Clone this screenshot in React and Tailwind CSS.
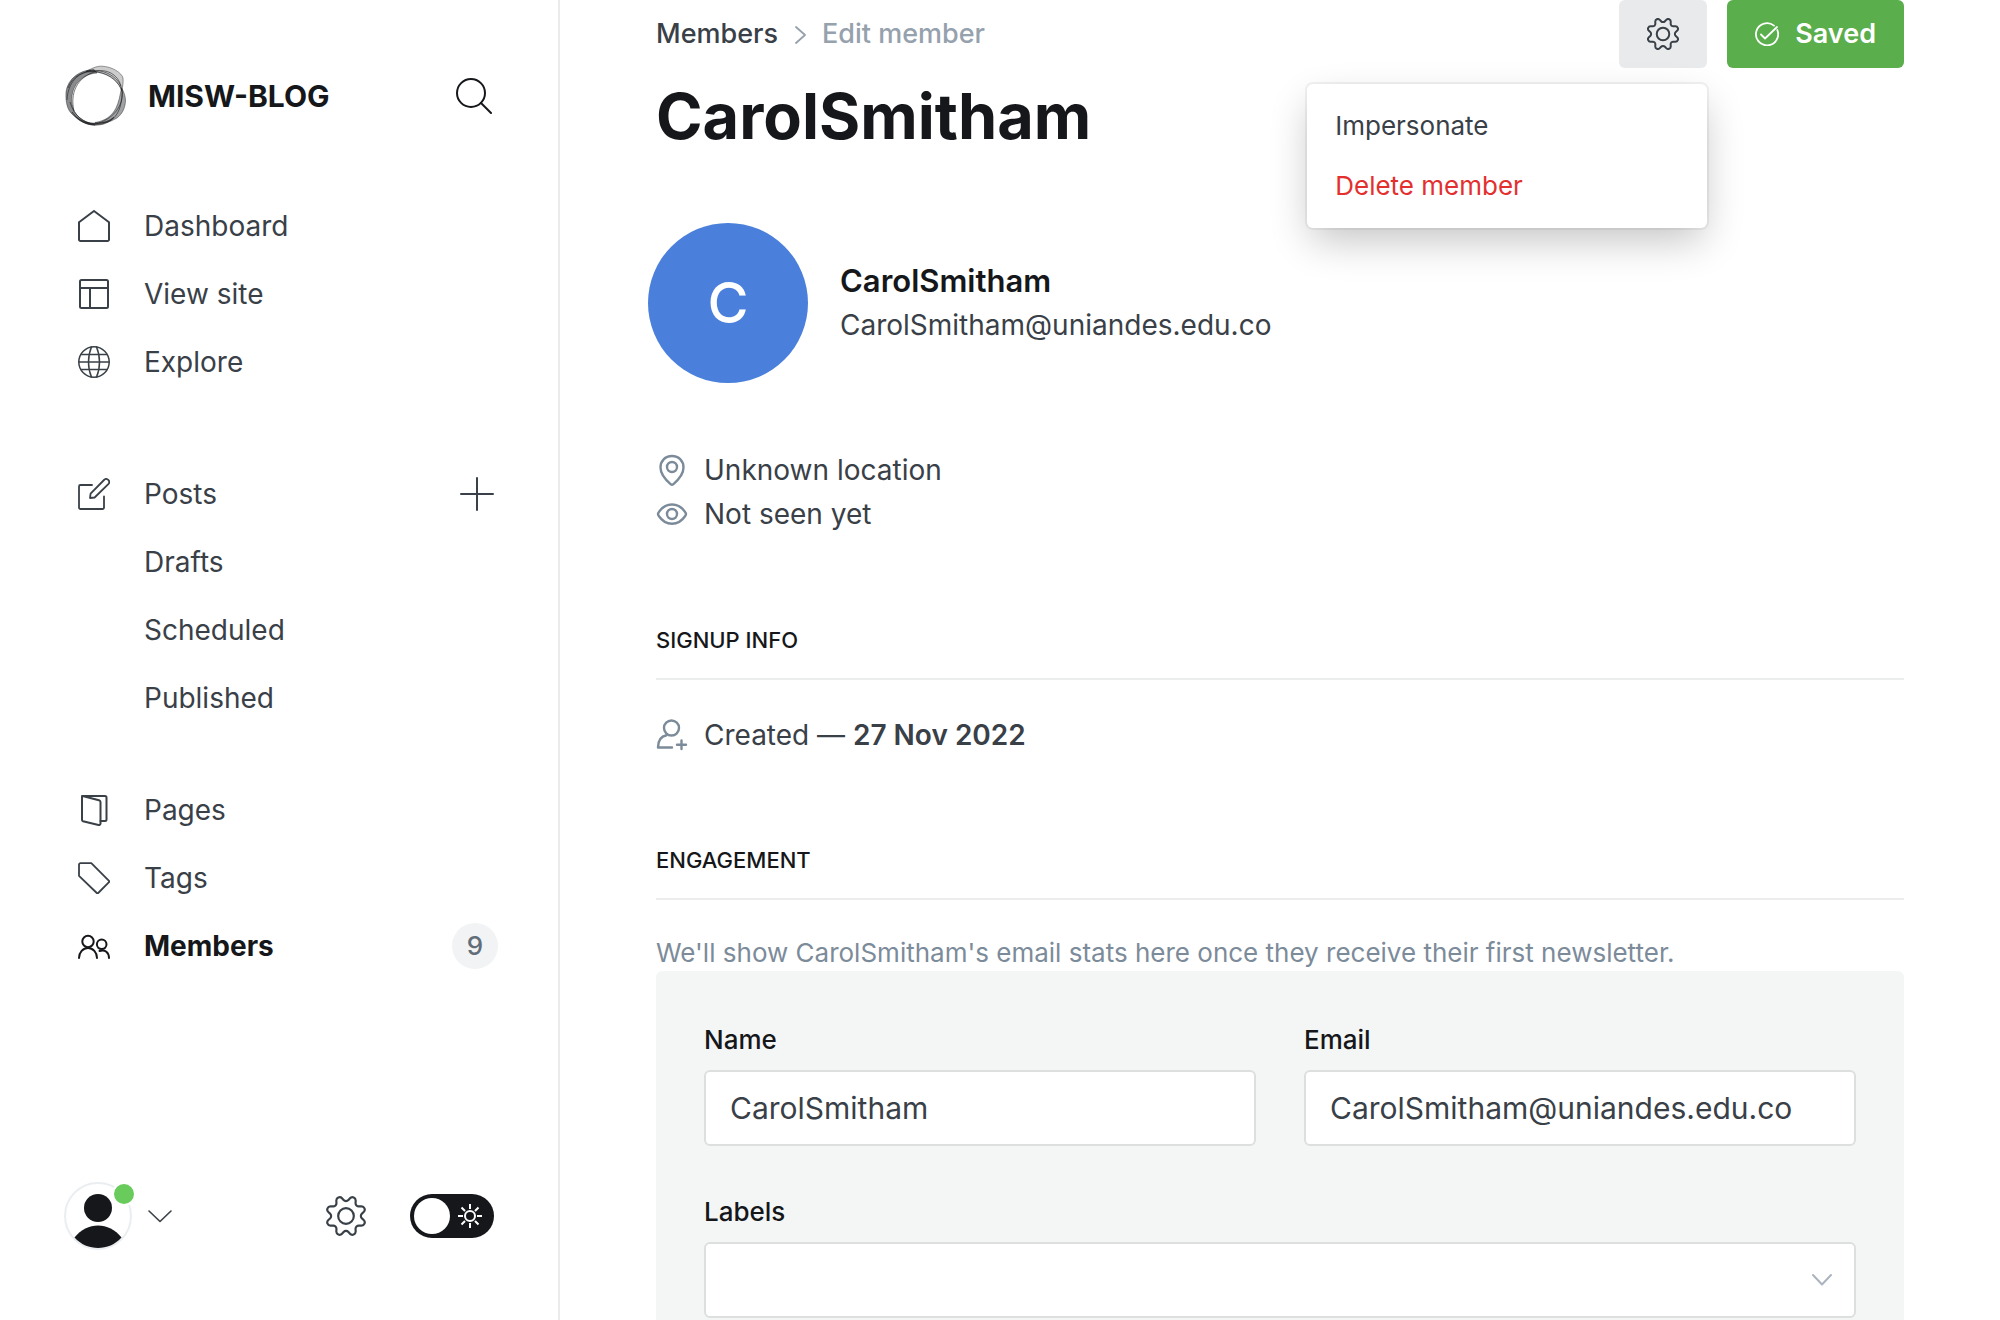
const INK = "text-[#15171a]";

function Icon({ children, className = "size-8", box = 32, width = 2 }) {
  return (
    <svg
      aria-hidden="true"
      viewBox={`0 0 ${box} ${box}`}
      className={`shrink-0 ${className}`}
      fill="none"
      stroke="currentColor"
      strokeWidth={width}
      strokeLinecap="round"
      strokeLinejoin="round"
    >
      {children}
    </svg>
  );
}

const House = () => (
  <Icon>
    <path d="M1 12.2 L16 1 L31 12.2 V29.5 a1.5 1.5 0 0 1 -1.5 1.5 H2.5 a1.5 1.5 0 0 1 -1.5 -1.5 Z" />
  </Icon>
);
const Layout = () => (
  <Icon>
    <rect x="2" y="2" width="28" height="28" rx="1.5" />
    <path d="M2 10 H30 M12 10 V30" />
  </Icon>
);
const Globe = () => (
  <Icon width={1.5}>
    <circle cx="16" cy="16" r="15.2" />
    <path d="M13.5 1 C9.5 10 9.5 22 13.5 31 M18.5 1 C22.5 10 22.5 22 18.5 31 M1 16 H31 M3 8.5 H29 M3 23.5 H29" />
  </Icon>
);
const Pencil = () => (
  <Icon width={1.8}>
    <path d="M14 7 H2.5 A1.5 1.5 0 0 0 1 8.5 V29.5 A1.5 1.5 0 0 0 2.5 31 H24.500 A1.500 1.500 0 0 0 26 29.500 V18.500" />
    <path d="M12 20 L12.600 15.600 L26 2 A2.900 2.900 0 0 1 30.300 6.200 L16.600 19.500 Z" />
  </Icon>
);
const Pages = () => (
  <Icon>
    <path d="M4 2 H27 A1.500 1.500 0 0 1 28.500 3.500 V25.500 A1.500 1.500 0 0 1 27 27 H22.500" />
    <path d="M5.500 2.200 L21 6.200 A2 2 0 0 1 22.500 8 V29.500 A1.500 1.500 0 0 1 20.500 31 L5 27.200 A1.500 1.500 0 0 1 4 25.700 V3.300 A1.200 1.200 0 0 1 5.500 2.200 Z" />
  </Icon>
);
const Tag = () => (
  <Icon width={1.8}>
    <path d="M2.500 1.200 H13.300 L31 18.800 A1 1 0 0 1 31 20.200 L20.200 31 A1 1 0 0 1 18.800 31 L1 13.800 V2.700 A1.500 1.500 0 0 1 2.500 1.200 Z" />
  </Icon>
);
const People = () => (
  <Icon>
    <circle cx="10" cy="11.500" r="5.700" />
    <path d="M1 28 A9 10 0 0 1 19 28" />
    <circle cx="23.700" cy="14.300" r="4.800" />
    <path d="M21.500 21 C27 19 31 22.500 31 28" />
  </Icon>
);

const Gear = ({ className, width }) => (
  <Icon box={24} className={className} width={width}>
    <circle cx="12" cy="12" r="4.700" />
    <path d="M10.546 2.438a1.957 1.957 0 0 0 2.908 0L14.4 1.4a1.959 1.959 0 0 1 3.41 1.413l-.071 1.4A1.958 1.958 0 0 0 19.79 6.27l1.4-.071A1.959 1.959 0 0 1 22.6 9.606l-1.042.94a1.96 1.96 0 0 0 0 2.909l1.042.94a1.959 1.959 0 0 1-1.413 3.405l-1.4-.071a1.958 1.958 0 0 0-2.056 2.056l.071 1.4A1.959 1.959 0 0 1 14.4 22.6l-.941-1.041a1.959 1.959 0 0 0-2.908 0L9.606 22.6A1.959 1.959 0 0 1 6.2 21.192l.072-1.4a1.958 1.958 0 0 0-2.056-2.056l-1.4.071A1.958 1.958 0 0 1 1.4 14.4l1.041-.94a1.96 1.96 0 0 0 0-2.909L1.4 9.606A1.958 1.958 0 0 1 2.809 6.2l1.4.071a1.958 1.958 0 0 0 2.058-2.06L6.2 2.81A1.959 1.959 0 0 1 9.606 1.4z" />
  </Icon>
);

function Logo() {
  return (
    <svg aria-hidden="true" viewBox="0 0 64 64" className="size-16 shrink-0">
      <g fill="#15171a" stroke="#15171a" strokeOpacity="0.6" strokeWidth="0.7">
        <path fillOpacity="0.22" d="M22 7.500 C30 3 34 2 38 2.200 C48 2.500 58 9 59 14 C59.500 19 58.500 22 58 27 C55 18 47 11 38 9 C33 7.500 27 7 22 7.500 Z" />
        <path fillOpacity="0.4" d="M57.500 24 C60 28 61.500 32 61.500 37 C61 45 58 50 53 54 C46 58 40 60 31 58.500 C41 57 48 52 52 44 C55 38 56 31 57.500 24 Z" />
        <path fillOpacity="0.5" d="M30 5.500 C16 6 4 14 2 28 C1.500 38 3 46 9 51 C15 57 22 61 31 61 C22 59 14 54 10 47 C6 38 7 25 15 17 C20 12 26 9.500 33 9 Z" />
        <path fillOpacity="0.7" d="M8 48 C14 56 22 59.500 32 59 C39 59 45 57 50 53 C46 59 38 61.200 31 61.200 C21 61 13 56 8 48 Z" />
      </g>
      <g fill="none" stroke="#15171a" strokeOpacity="0.7" strokeWidth="0.8">
        <path d="M22 7.500 C40 3 57 14 58.500 28 C59 42 49 56 31 60" />
        <path d="M10 47 C6 30 12 13 33 7 C42 5 54 10 57 22" />
        <path d="M4 24 C8 12 20 6 33 8 C46 10 56 19 58 28 C58 42 54 52 46 57" />
        <path d="M3 36 C4 18 14 9 27 6.500" />
        <path d="M6 38 C10 52 20 59 31 60" />
      </g>
    </svg>
  );
}

function NavItem({ icon, label, active, children }) {
  return (
    <li className="flex h-[68px] items-center justify-between">
      <a
        href="#"
        className={`flex items-center gap-[34px] text-[28px] leading-9 ${active ? "font-bold text-[#15171a]" : "text-[#394047]"}`}
      >
        <span className="flex w-8 shrink-0">{icon}</span>
        {label}
      </a>
      {children}
    </li>
  );
}

function Sidebar() {
  return (
    <aside className="flex h-full w-[560px] shrink-0 flex-col border-r-2 border-[#ebebeb] px-16">
      <div className="flex items-center pt-16">
        <Logo />
        <span className={`ml-5 flex-1 text-[30px] leading-9 font-bold ${INK}`}>MISW-BLOG</span>
        <button type="button" aria-label="Search" className={`mr-0.5 flex ${INK}`}>
          <Icon className="size-9" box={36} width={2}>
            <circle cx="15" cy="15" r="14" />
            <path d="M25 25 L35 35" />
          </Icon>
        </button>
      </div>
      <nav className="flex flex-1 flex-col pt-16 pl-[14px]">
        <ul>
          <NavItem icon={<House />} label="Dashboard" />
          <NavItem icon={<Layout />} label="View site" />
          <NavItem icon={<Globe />} label="Explore" />
        </ul>
        <ul className="mt-16">
          <NavItem icon={<Pencil />} label="Posts">
            <button type="button" aria-label="New post" className="flex text-[#394047]">
              <Icon className="size-[34px]" box={34}>
                <path d="M17 1 V33 M1 17 H33" />
              </Icon>
            </button>
          </NavItem>
          <NavItem label="Drafts" />
          <NavItem label="Scheduled" />
          <NavItem label="Published" />
        </ul>
        <ul className="mt-11">
          <NavItem icon={<Pages />} label="Pages" />
          <NavItem icon={<Tag />} label="Tags" />
          <NavItem icon={<People />} label="Members" active>
            <span className="-mr-1 flex size-[46px] items-center justify-center rounded-full bg-[#f1f3f4] text-[26px] leading-8 font-medium text-[#626d79]">
              9
            </span>
          </NavItem>
        </ul>
      </nav>
      <div className="flex items-center pb-[70px]">
        <button type="button" aria-label="Account menu" className="flex items-center gap-4 text-[#394047]">
          <span className="relative flex">
            <svg aria-hidden="true" viewBox="0 0 68 68" className="size-[68px]">
              <circle cx="34" cy="34" r="33" fill="#fff" stroke="#ebeef0" strokeWidth="2" />
              <circle cx="34" cy="26" r="14" fill="#15171a" />
              <path d="M10.500 55.500 C23 39.500 45 39.500 57.500 55.500 C45 69.500 23 69.500 10.500 55.500 Z" fill="#15171a" />
            </svg>
            <span className="absolute top-0 -right-1 size-6 rounded-full border-2 border-white bg-[#69cb5b]" />
          </span>
          <Icon className="size-6" box={24} width={1.6}>
            <path d="M1 7 L12 17.500 L23 7" />
          </Icon>
        </button>
        <a href="#" aria-label="Settings" className="ml-auto flex text-[#394047]">
          <Gear className="size-10" width={1.3} />
        </a>
        <button
          type="button"
          role="switch"
          aria-checked="false"
          aria-label="Night shift"
          className="ml-11 flex h-11 w-[84px] items-center justify-between rounded-full bg-[#15171a] pr-3 pl-1 text-white"
        >
          <span className="size-9 rounded-full bg-white" />
          <Icon className="size-6" box={24}>
            <circle cx="12" cy="12" r="5" />
            <path
              strokeLinecap="butt"
              d="M12 0 V5 M12 19 V24 M0 12 H5 M19 12 H24 M3.500 3.500 L7 7 M17 17 L20.500 20.500 M20.500 3.500 L17 7 M7 17 L3.500 20.500"
            />
          </Icon>
        </button>
      </div>
    </aside>
  );
}

function Header() {
  return (
    <header className="flex h-[68px] items-center justify-between">
      <nav aria-label="Breadcrumb" className="flex items-center gap-4 text-[27px] leading-9 font-medium">
        <a href="#" className="text-[#394047]">Members</a>
        <svg
          aria-hidden="true"
          viewBox="0 0 12 20"
          className="h-5 w-3 text-[#95a1ad]"
          fill="none"
          stroke="currentColor"
          strokeWidth="1.800"
          strokeLinecap="round"
          strokeLinejoin="round"
        >
          <path d="M2 3 L11 11 L2 19" />
        </svg>
        <span className="text-[#95a1ad]">Edit member</span>
      </nav>
      <div className="flex h-full gap-5">
        <div className="relative">
          <button
            type="button"
            aria-label="Member actions"
            aria-expanded="true"
            className="flex h-full w-[88px] items-center justify-center rounded-md bg-[#e9eaec] text-[#394047]"
          >
            <Gear className="size-8" width={1.500} />
          </button>
          <ul className="absolute top-[84px] right-0 w-[400px] rounded-md bg-white py-3 text-[26px] leading-8 shadow-[0_0_0_2px_rgba(0,0,0,0.05),0_16px_40px_-4px_rgba(0,0,0,0.24)]">
            <li>
              <button type="button" className="flex h-[60px] w-full items-center px-7 text-[#394047]">Impersonate</button>
            </li>
            <li>
              <button type="button" className="flex h-[60px] w-full items-center px-7 text-[#e3302f]">Delete member</button>
            </li>
          </ul>
        </div>
        <button
          type="button"
          className="flex h-full items-center gap-4 rounded-md bg-[#5aae4c] px-7 text-[27px] leading-9 font-semibold text-white"
        >
          <Icon className="size-6" box={24} width={1.800}>
            <path d="M22.300 8 A11.100 11.100 0 1 1 19 3.600" />
            <path d="M6 12.500 L10 16.500 L22 5" />
          </Icon>
          Saved
        </button>
      </div>
    </header>
  );
}

function Fact({ icon, children }) {
  return (
    <p className="flex h-11 items-center gap-4 text-[28px] leading-9 text-[#394047]">
      <span className="flex text-[#7c8b9a]">{icon}</span>
      <span>{children}</span>
    </p>
  );
}

function SectionTitle({ children }) {
  return (
    <h3 className={`border-b-2 border-[#eceded] pb-[22px] text-[22px] leading-8 font-medium uppercase ${INK}`}>{children}</h3>
  );
}

const field =
  "h-[76px] w-full rounded-md border-2 border-[#dddfdf] bg-white px-6 text-[30px] leading-9 text-[#394047] outline-none";
const label = `mb-3 block text-[26px] leading-9 font-medium ${INK}`;

export default function App() {
  return (
    <div className="flex h-screen overflow-hidden bg-white font-['Inter',sans-serif]">
      <Sidebar />
      <main className="h-full min-w-0 flex-1 overflow-hidden px-24">
        <Header />
        <h1 className={`mt-2 text-[63px] leading-20 font-bold ${INK}`}>CarolSmitham</h1>

        <section className="mt-[67px] -ml-2 flex items-center gap-8">
          <div className="flex size-40 shrink-0 items-center justify-center rounded-full bg-[#4a7fdc] text-[56px] leading-none font-medium text-white">
            C
          </div>
          <div>
            <h2 className={`text-[31px] leading-11 font-semibold ${INK}`}>CarolSmitham</h2>
            <p className="text-[28px] leading-11 text-[#394047]">CarolSmitham@uniandes.edu.co</p>
          </div>
        </section>

        <section className="mt-[65px]">
          <Fact
            icon={
              <Icon width={2.400}>
                <path d="M16 2 C23 2 27.500 7 27.500 13.500 C27.500 21 20.500 27.500 17.200 30.300 A2 2 0 0 1 14.800 30.300 C11.500 27.500 4.500 21 4.500 13.500 C4.500 7 9 2 16 2 Z" />
                <circle cx="16" cy="13" r="5" />
              </Icon>
            }
          >
            Unknown location
          </Fact>
          <Fact
            icon={
              <Icon width={2.400}>
                <path d="M16 6.500 C22 6.500 26.500 10 29.200 14.200 A3 3 0 0 1 29.200 18 C26.500 22 22 25.800 16 25.800 C10 25.800 5.500 22 2.800 18 A3 3 0 0 1 2.800 14.200 C5.500 10 10 6.500 16 6.500 Z" />
                <circle cx="16" cy="16" r="5" />
              </Icon>
            }
          >
            Not seen yet
          </Fact>
        </section>

        <section className="mt-22">
          <SectionTitle>Signup info</SectionTitle>
          <div className="pt-[33px]">
            <Fact
              icon={
                <Icon width={2.400}>
                  <circle cx="15.500" cy="9" r="7.500" />
                  <path d="M10.500 16.200 C4 17.500 2 21.500 2 28.500 H16 M25.500 21.500 V30 M21 25.700 H30" />
                </Icon>
              }
            >
              Created — <strong className="font-semibold">27 Nov 2022</strong>
            </Fact>
          </div>
        </section>

        <section className="mt-[87px]">
          <SectionTitle>Engagement</SectionTitle>
          <p className="pt-[35px] text-[26px] leading-9 text-[#7c8b9a]">
            We'll show CarolSmitham's email stats here once they receive their first newsletter.
          </p>
        </section>

        <form className="grid grid-cols-2 gap-12 rounded-md bg-[#f4f6f6] px-12 pt-[51px] pb-12">
          <div>
            <label htmlFor="name" className={label}>Name</label>
            <input id="name" type="text" defaultValue="CarolSmitham" className={field} />
          </div>
          <div>
            <label htmlFor="email" className={label}>Email</label>
            <input id="email" type="email" defaultValue="CarolSmitham@uniandes.edu.co" className={field} />
          </div>
          <div className="col-span-2">
            <label htmlFor="labels" className={label}>Labels</label>
            <div className="relative">
              <select id="labels" defaultValue="" className={`${field} appearance-none`}>
                <option value="" />
              </select>
              <span className="pointer-events-none absolute inset-y-0 right-6 flex items-center text-[#abb4be]">
                <Icon className="size-5" box={20}>
                  <path d="M1 5 L10 14.500 L19 5" />
                </Icon>
              </span>
            </div>
          </div>
        </form>
      </main>
    </div>
  );
}
